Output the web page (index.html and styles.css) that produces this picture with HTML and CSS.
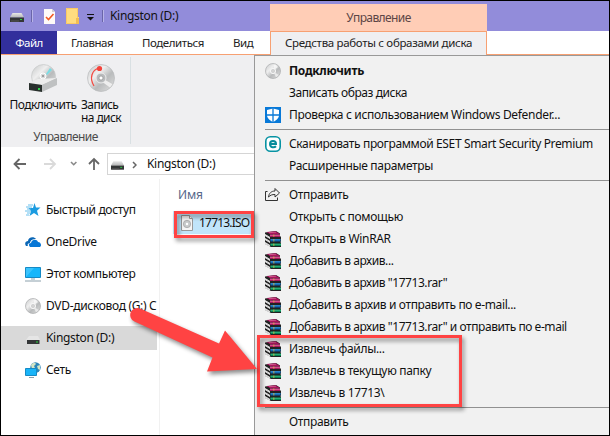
FILE: index.html
```html
<!DOCTYPE html>
<html lang="ru">
<head>
<meta charset="utf-8">
<title>Kingston (D:)</title>
<link rel="stylesheet" href="styles.css">
</head>
<body>
<svg class="defs" aria-hidden="true">
  <defs>
    <linearGradient id="silver" x1="0" y1="0" x2="1" y2="1">
      <stop offset="0" stop-color="#c4c6c7"/><stop offset=".35" stop-color="#efefef"/>
      <stop offset=".6" stop-color="#b9bbbc"/><stop offset="1" stop-color="#e3e3e3"/>
    </linearGradient>
    <linearGradient id="steel" x1="0" y1="0" x2="0" y2="1">
      <stop offset="0" stop-color="#e8e8e8"/><stop offset="1" stop-color="#b4b5b6"/>
    </linearGradient>
    <symbol id="drive" viewBox="0 0 14 9">
      <path d="M2.5 0h9L14 4.5H0z" fill="url(#steel)"/>
      <path d="M0 4.5h14V9H0z" fill="#343637"/>
      <path d="M1 8h8" stroke="#555"/><path d="M10 6h2v1h-2z" fill="#27d33d"/>
    </symbol>
    <symbol id="disc" viewBox="0 0 16 16">
      <circle cx="8" cy="8" r="7.5" fill="url(#silver)" stroke="#a9abac" stroke-width=".7"/>
      <path d="M8 8 9.5 1.500A7 7 0 0 1 13 4z" fill="#fff" opacity=".7"/>
      <path d="M8 8 13.500 12A7 7 0 0 1 11 14.200z" fill="#fff" opacity=".6"/>
      <circle cx="8" cy="8" r="2.600" fill="#d5d6d7" stroke="#f7f7f7"/>
      <circle cx="8" cy="8" r="1" fill="#fafafa" stroke="#aaa" stroke-width=".5"/>
    </symbol>
    <symbol id="rar" viewBox="0 0 16 16">
      <path d="M0 1.500 11 0l4 2.500V5l1 1v4l-.5 1 .5 1v4H6L0 13z" fill="#222"/>
      <path d="M1.500 1 10.500.3 15 3H5z" fill="#a8145c"/>
      <path d="M4 1.700 11 1.200" stroke="#e0709f" stroke-width=".7"/>
      <path d="M5 3.500h10v2.300H5z" fill="#c3186c"/><path d="M5 4.200h10" stroke="#ec86b3" stroke-width=".7"/>
      <path d="M5.500 8h10v2.500h-10z" fill="#0658a4"/><path d="M5.500 8.800h10" stroke="#47a9e6" stroke-width=".8"/>
      <path d="M5.500 12.500H16V15H5.500z" fill="#058050"/><path d="M5.500 13.300H16" stroke="#3ec48a" stroke-width=".8"/>
      <path d="m0 3 5 3v2L0 5zM0 7l5 3v2L0 9zM0 11l5 3v1.800L0 13z" fill="#fff"/>
      <path d="m0 4 5 3M0 8l5 3M0 12l5 3" stroke="#888" stroke-width=".4"/>
      <path d="M8 3.500h1.500v2.300H8zM8 8h1.500v2.500H8zM8 12.500h1.500V15H8z" fill="#e9c23b" opacity=".5"/>
    </symbol>
  </defs>
</svg>
<div class="window">
  <header class="titlebar">
    <div class="quick">
      <svg class="drive"><use href="#drive"/></svg>
      <i class="bar"></i>
      <svg class="check" viewBox="0 0 11 15"><path d="M0 0h8l3 3v12H0z" fill="#fdfaf8"/><path d="M8 0v3h3" fill="#d4cfd2"/><path d="m2 8 2.500 2.500L9.500 5" fill="none" stroke="#f15a24" stroke-width="1.600"/></svg>
      <svg class="folder" viewBox="0 0 13 16"><path d="M0 0h12v9h1v7H0z" fill="#ffdc80"/><path d="M.5.5h11v15H.5z" fill="none" stroke="#fbc964"/><path d="M10 10h3v6h-3z" fill="#f2bd53"/></svg>
      <svg class="caret" viewBox="0 0 7 7"><path d="M0 .5h7" stroke="#111"/><path d="M0 3h7L3.500 6.500z" fill="#111"/></svg>
      <i class="bar"></i>
    </div>
    <span class="caption">Kingston (D:)</span>
    <span class="context">Управление</span>
  </header>
  <nav class="tabs">
    <span class="file">Файл</span>
    <span class="tab home">Главная</span>
    <span class="tab share">Поделиться</span>
    <span class="tab view">Вид</span>
    <span class="tab tools">Средства работы с образами диска</span>
  </nav>
  <div class="main">
    <section class="explorer">
      <div class="ribbon">
        <div class="group">
          <div class="buttons">
            <div class="button mount">
              <svg viewBox="0 0 28 28"><circle cx="14.500" cy="12.500" r="12" fill="url(#silver)" stroke="#c6c8c9" stroke-width=".7"/><path d="m17 10 4-6 2 2-5 5z" fill="#79dde5"/><circle cx="14" cy="12" r="3" fill="#d9dadb" stroke="#fff"/><circle cx="14" cy="12" r="1" fill="#888"/><path d="m0 19 9-4 19-1-15 7z" fill="#ededed"/><path d="m0 19 13 2v7L0 26z" fill="#29302d"/><path d="m13 21 15-7v7l-15 7z" fill="#bfc1c2"/><path d="M9 24h2v2H9z" fill="#2fd04b"/></svg>
              <span>Подключить</span>
            </div>
            <div class="button burn">
              <svg viewBox="0 0 28 28"><circle cx="14" cy="14" r="13.500" fill="url(#silver)" stroke="#b8babb" stroke-width=".7"/><path d="m17 15 9 5-3 4-8-6z" fill="#eee" stroke="#bbb" stroke-width=".5"/><circle cx="14" cy="14" r="5" fill="#b8babc" stroke="#eee"/><circle cx="14" cy="14" r="2" fill="#fff" stroke="#888" stroke-width=".6"/><path d="M12 4C5 6 2 14 7 22" fill="none" stroke="#f34b43" stroke-width="1.300"/><circle cx="12.500" cy="4.500" r="2.600" fill="#f4433b"/></svg>
              <span>Запись<br>на диск</span>
            </div>
          </div>
          <div class="group-name">Управление</div>
        </div>
      </div>
      <div class="address">
        <svg class="arrows" viewBox="0 0 90 14" fill="none" stroke-width="1.800"><path d="M13 7H2M6.500 2 1.500 7l5 5" stroke="#666"/><path d="M31 7h11M37 2l5 5-5 5" stroke="#dadada"/><path d="m58 5 2.700 2.700L63.400 5" stroke="#888" stroke-width="1.600"/><path d="M81 13V2M76 7l5-5 5 5" stroke="#666"/></svg>
        <div class="path">
          <svg class="drive"><use href="#drive"/></svg>
          <svg class="chevron" viewBox="0 0 5 8"><path d="m1 1 3 3-3 3" fill="none" stroke="#666" stroke-width="1.500"/></svg>
          <span>Kingston (D:)</span>
        </div>
      </div>
      <div class="body">
        <aside class="sidebar">
          <div class="place"><svg viewBox="0 0 16 16"><path d="m9.500 1 1.500 4.500h4.500L12 8.700l1.500 5.300L9 11l-4.500 3L6 9 3.500 6H8z" fill="#1b9be0"/><path d="M3 3h5M1 5h6M2 7h4M0 9h6M2 11h3M1 13h3" stroke="#59b9ea" stroke-width=".9"/></svg><span>Быстрый доступ</span></div>
          <div class="place"><svg viewBox="0 0 16 16"><path d="M1 12c-2-3 0-5 2-5 0-4 6-5 8-2-4-.5-6 2-6 4-2 0-3 2-2 3z" fill="#0b67b6"/><path d="M5 13c-2-2-1-4 1-4 1-4 6-4 7-1 3 0 4 4 2 5z" fill="#0877d6"/></svg><span>OneDrive</span></div>
          <div class="place"><svg viewBox="0 0 16 16"><path d="M.5 1.500h15v10H.5z" fill="#16b6fb" stroke="#168ac5"/><path d="m1 11 8-9H1z" fill="#5bcfff" opacity=".55"/><path d="M6 12h4v2H6z" fill="#c5d1d8"/><path d="M0 15h16" stroke="#8ba0ac"/></svg><span>Этот компьютер</span></div>
          <div class="place"><svg><use href="#disc"/></svg><span>DVD-дисковод (G:) C</span></div>
          <div class="place selected"><svg viewBox="0 0 16 16"><path d="M4 6h9l2 4H1z" fill="#e5e5e5"/><path d="M2 10h12.500v4H2z" fill="#343637"/><path d="M11 11.500h2v1h-2z" fill="#27d33d"/></svg><span>Kingston (D:)</span></div>
          <div class="place"><svg viewBox="0 0 16 16"><circle cx="10.500" cy="5.500" r="5.200" fill="#2d86b8"/><path d="M6 3c2-3 5-2 5-1L9 4l1 2-3 1zM12 4l3-1v5l-2-1z" fill="#d4e5c4"/><path d="M.5 6.500h11v7H.5z" fill="#18b4f8" stroke="#168ac5"/><path d="M4 15.500h5" stroke="#8ba0ac"/></svg><span>Сеть</span></div>
        </aside>
        <div class="files">
          <div class="column">Имя</div>
          <div class="iso"><svg viewBox="0 0 12 16"><path d="M.5.5h8l3 3v12H.5z" fill="#f5f5f5" stroke="#999"/><path d="M8.500.5v3h3" fill="#fff" stroke="#999"/><circle cx="6" cy="9" r="3.700" fill="#c7c9ca" stroke="#999" stroke-width=".6"/><circle cx="6" cy="9" r="1.200" fill="#fff"/></svg><span>17713.ISO</span></div>
        </div>
      </div>
    </section>
    <section class="menu">
      <div class="item bold"><svg><use href="#disc"/></svg><span>Подключить</span></div>
      <div class="item tight"><i></i><span>Записать образ диска</span></div>
      <div class="item"><svg viewBox="0 0 16 16"><path d="M0 0h16v16H0z" fill="#0879d8"/><path d="M8 1.500 14 3v5c0 3.500-3 5.500-6 7-3-1.500-6-3.500-6-7V3z" fill="#fff"/><path d="M8 1v14M1 8h14" stroke="#0879d8" stroke-width="1.300"/></svg><span>Проверка с использованием Windows Defender...</span></div>
      <hr>
      <div class="item"><svg viewBox="0 0 16 16"><rect x=".8" y=".8" width="14.400" height="14.400" rx="4.500" fill="#fff" stroke="#0793a3" stroke-width="1.600"/><path d="M5 8h6c0-4-6-4-6 0 0 4 4.500 3.700 6 2.300" fill="none" stroke="#078c9b" stroke-width="2"/></svg><span class="eset">Сканировать программой ESET Smart Security Premium</span></div>
      <div class="item"><i></i><span>Расширенные параметры</span></div>
      <hr>
      <div class="item"><svg viewBox="0 0 16 16" fill="none" stroke="#333"><path d="M2.500 4.500h-2v9h12v-3"/><path d="M3.500 10c.5-4 3-6 6.500-6V1.500L14.500 6 10 10V7.500c-3 0-4.500.5-6.500 2.500z"/></svg><span>Отправить</span></div>
      <div class="item"><i></i><span>Открыть с помощью</span></div>
      <div class="item"><svg><use href="#rar"/></svg><span>Открыть в WinRAR</span></div>
      <div class="item tight"><svg><use href="#rar"/></svg><span>Добавить в архив...</span></div>
      <div class="item tight"><svg><use href="#rar"/></svg><span>Добавить в архив "17713.rar"</span></div>
      <div class="item mail"><svg><use href="#rar"/></svg><span>Добавить в архив и отправить по e-mail...</span></div>
      <div class="item tight"><svg><use href="#rar"/></svg><span>Добавить в архив "17713.rar" и отправить по e-mail</span></div>
      <div class="item"><svg><use href="#rar"/></svg><span>Извлечь файлы...</span></div>
      <div class="item"><svg><use href="#rar"/></svg><span>Извлечь в текущую папку</span></div>
      <div class="item"><svg><use href="#rar"/></svg><span>Извлечь в 17713\</span></div>
      <hr>
      <div class="item"><i></i><span>Отправить</span></div>
    </section>
  </div>
</div>
<div class="mark mark-file"></div>
<div class="mark mark-extract"></div>
<svg class="pointer" viewBox="0 0 140 80"><path d="M16 6.500 95 41.500 101 28.500 133 67 83 69.500 88.500 55.500 10.500 19.500A7 7 0 0 1 16 6.500z" fill="#ff4343"/></svg>
</body>
</html>
```
FILE: styles.css
```css
* { box-sizing: border-box; }
body {
  margin: 0;
  font: 12px/16px "Noto Sans", "Open Sans", sans-serif;
  letter-spacing: -.32px;
  color: #111;
  position: relative;
}
svg { display: block; flex: none; }
.defs { position: absolute; width: 0; height: 0; }
span { white-space: nowrap; }
.window {
  width: 610px;
  height: 436px;
  border: 1px solid #000;
  background: #fff;
  display: flex;
  flex-direction: column;
  overflow: hidden;
}
.drive { width: 14px; height: 9px; }

.titlebar { height: 30px; background: #928cda; display: flex; }
.quick { width: 109px; padding: 0 6px 0 9px; display: flex; align-items: center; flex: none; }
.quick .drive { margin-top: 3px; }
.bar { width: 1px; height: 12px; background: #6a65a8; box-shadow: 1px 0 #b8b4e8; margin-left: 7px; }
.check { width: 11px; height: 15px; margin-left: 12px; }
.folder { width: 13px; height: 16px; margin-left: 11px; }
.caret { width: 7px; height: 7px; margin: 2px 0 0 8px; }
.caret + .bar { margin-left: 8px; }
.caption { width: 160px; line-height: 29px; }
.context { width: 217px; margin-top: 3px; line-height: 28px; text-align: center; background: #ffcdb6; color: #5c4545; letter-spacing: -.6px; }

.tabs { height: 24px; flex: none; display: flex; border-bottom: 1px solid #f7a072; font-size: 11.5px; line-height: 24px; letter-spacing: -.42px; color: #222; }
.file { width: 56px; background: #322f9c; color: #fff; text-align: center; letter-spacing: -.55px; }
.home { margin-left: 14px; width: 71px; }
.share { width: 91px; }
.view { width: 37px; }
.tools { width: 217px; height: 24px; padding-left: 14px; background: #efeff1; border: 1px solid #f7a072; border-bottom: 0; line-height: 22px; letter-spacing: -.32px; }

.main { flex: 1; display: flex; min-height: 0; }
.explorer { width: 253px; flex: none; display: flex; flex-direction: column; }
.ribbon { height: 92px; background: #efeff1; padding: 2px 0 3px; }
.group { width: 130px; height: 87px; border-right: 1px solid #d9e0e3; padding-top: 7px; }
.buttons { display: flex; height: 64px; }
.button { display: flex; flex-direction: column; align-items: center; line-height: 13px; letter-spacing: -.58px; }
.button svg { width: 28px; height: 28px; }
.button span { margin-top: 6px; }
.mount { margin-left: 8px; width: 68px; }
.burn { margin-left: 4px; width: 40px; align-items: flex-start; }
.burn svg { margin-left: 6px; }
.group-name { text-align: center; letter-spacing: -.6px; color: #4b4b4b; line-height: 17px; }

.address { height: 32px; display: flex; padding-top: 6px; }
.arrows { width: 90px; height: 14px; margin: 4px 3px 0 12px; }
.path { width: 148px; flex: none; margin-left: 1px; height: 22px; border: 1px solid #d5d5d5; border-right: 0; display: flex; align-items: center; }
.path .drive { width: 13px; margin: 3px 0 0 3px; }
.chevron { width: 5px; height: 8px; margin: 1px 10px 0 8px; }

.body { flex: 1; display: flex; }
.sidebar { width: 159px; padding-top: 19px; border-right: 1px solid #f1f1f1; }
.place { width: 156px; height: 24px; margin-bottom: 8px; padding-left: 24px; display: flex; align-items: center; gap: 5px; }
.place svg { width: 16px; height: 16px; }
.selected { background: #d9d9d9; }
.files { padding: 7px 0 0 13px; flex: 1; }
.column { padding-left: 5px; color: #56678a; line-height: 17px; letter-spacing: -.1px; }
.iso { width: 81px; height: 23px; margin-top: 8px; padding-left: 8px; background: #c1e5fa; display: flex; align-items: center; gap: 6px; letter-spacing: -.8px; }
.iso svg { width: 12px; height: 16px; }

.menu { flex: 1; background: #f1f1f1; border-left: 1px solid #999; border-top: 1px solid #999; padding: 4px 0 0 10px; min-width: 0; }
.item { height: 22px; display: flex; align-items: center; gap: 8px; }
.item svg, .item i { width: 16px; height: 16px; flex: none; }
.tight { letter-spacing: -.44px; }
.mail { letter-spacing: -.37px; }
.eset { letter-spacing: -.36px; }
.bold { font-weight: 700; letter-spacing: -.3px; }
hr { height: 7px; margin: 0; border: solid #f1f1f1; border-width: 3px 0; background: #919191; }

.mark { position: absolute; border: 3px solid #ff4343; filter: drop-shadow(2px 3px 2px rgba(0, 0, 0, .45)); }
.mark-file { left: 174px; top: 211px; width: 80px; height: 27px; }
.mark-extract { left: 257px; top: 335px; width: 205px; height: 72px; }
.pointer { position: absolute; left: 124px; top: 302px; width: 140px; height: 80px; filter: drop-shadow(2px 3px 2px rgba(0, 0, 0, .45)); }
```
